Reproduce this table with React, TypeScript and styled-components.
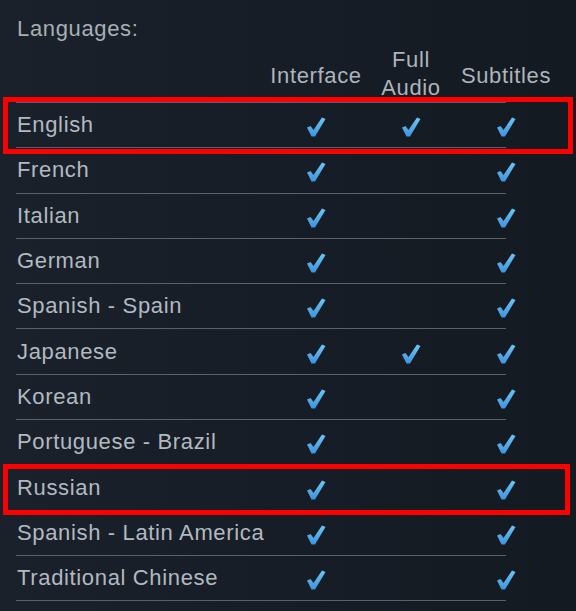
import React from 'react';
import styled, { createGlobalStyle } from 'styled-components';

const GlobalStyle = createGlobalStyle`
    html, body {
        margin: 0;
        padding: 0;
        background: #151b24;
    }
`;

const Panel = styled.div`
    width: 576px;
    height: 611px;
    box-sizing: border-box;
    padding: 15px 0 0 16px;
    overflow: hidden;
    background: linear-gradient(to right, #1a212b 0%, #171e27 35%, #141a22 100%);
    font-family: "Liberation Sans", Arial, sans-serif;
    font-size: 22px;
    letter-spacing: 0.65px;
    color: #b2b9c0;
`;

const Title = styled.div`
    line-height: 28px;
    height: 31px;
    padding-left: 1px;
    color: #a8afb6;
`;

const Table = styled.div`
    display: flex;
    flex-direction: column;
`;

const Row = styled.div<{ $header?: boolean }>`
    position: relative;
    width: 490px;
    display: grid;
    grid-template-columns: 252px 96px 94px 96px;
    align-items: center;
    height: ${(p) => (p.$header ? '56px' : '44.3px')};
    border-bottom: 1px solid #59616b;
`;

const Name = styled.div`
    padding-left: 1px;
    white-space: nowrap;
    line-height: 28px;
`;

const HeadCell = styled.div`
    text-align: center;
    line-height: 28px;
    color: #adb4bb;
    white-space: nowrap;
    padding-top: 3px;
`;

const TwoLine = styled(HeadCell)`
    padding-top: 0;
    white-space: normal;
`;

const CheckCell = styled.div`
    display: flex;
    justify-content: center;
    padding-top: 4px;
`;

const Highlight = styled.div<{ $top: number; $height: number; $width: number }>`
    position: absolute;
    left: -13px;
    top: ${(p) => p.$top}px;
    width: ${(p) => p.$width}px;
    height: ${(p) => p.$height}px;
    box-sizing: border-box;
    border: 5px solid #ff0000;
    pointer-events: none;
`;

const Check = () => (
    <svg width="20" height="20" viewBox="0 0 20 20">
        <defs>
            <linearGradient id="chk" x1="0" y1="0" x2="0" y2="1">
                <stop offset="0" stopColor="#6cc6f7" />
                <stop offset="1" stopColor="#3e93dc" />
            </linearGradient>
        </defs>
        <path d="M1 10.5 L4.5 9 L7.5 13 L16 0.5 L19.5 2 L9 19.5 L5.5 19.5 Z" fill="url(#chk)" />
    </svg>
);

interface ILanguage {
    name: string;
    audio: boolean;
    mark?: { top: number; height: number; width: number };
}

const languages: ILanguage[] = [
    { name: 'English', audio: true, mark: { top: -6, height: 57, width: 570 } },
    { name: 'French', audio: false },
    { name: 'Italian', audio: false },
    { name: 'German', audio: false },
    { name: 'Spanish - Spain', audio: false },
    { name: 'Japanese', audio: true },
    { name: 'Korean', audio: false },
    { name: 'Portuguese - Brazil', audio: false },
    { name: 'Russian', audio: false, mark: { top: -1, height: 51, width: 567 } },
    { name: 'Spanish - Latin America', audio: false },
    { name: 'Traditional Chinese', audio: false },
];

const App: React.FC = () => {
    return (
        <>
            <GlobalStyle />
            <Panel>
                <Title>Languages:</Title>
                <Table>
                    <Row $header>
                        <div />
                        <HeadCell>Interface</HeadCell>
                        <TwoLine>Full<br />Audio</TwoLine>
                        <HeadCell>Subtitles</HeadCell>
                    </Row>
                    {languages.map((lang) => (
                        <Row key={lang.name}>
                            <Name>{lang.name}</Name>
                            <CheckCell><Check /></CheckCell>
                            <CheckCell>{lang.audio && <Check />}</CheckCell>
                            <CheckCell><Check /></CheckCell>
                            {lang.mark && (
                                <Highlight
                                    $top={lang.mark.top}
                                    $height={lang.mark.height}
                                    $width={lang.mark.width}
                                />
                            )}
                        </Row>
                    ))}
                </Table>
            </Panel>
        </>
    );
};

export default App;
